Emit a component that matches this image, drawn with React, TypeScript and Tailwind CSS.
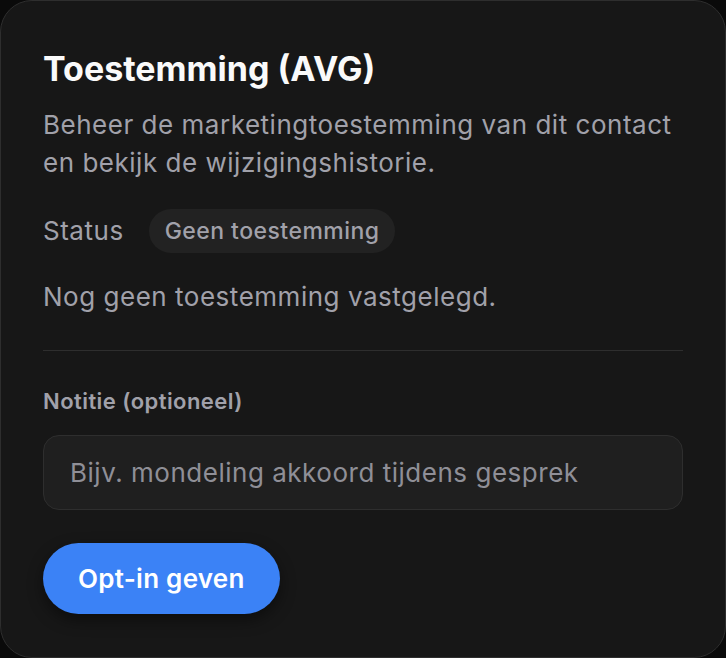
import React from "react"

const App = () => {
  const [note, setNote] = React.useState("")

  return (
    <div
      className="w-[726px] h-[658px] bg-[#0a0a0a]"
      style={{ fontFamily: "Inter, 'Noto Sans', sans-serif" }}
    >
      <div className="w-[726px] h-[658px] rounded-[32px] border border-[#2e2e2e] bg-[#171717] px-[42px] pt-[46px]">
        <h2 className="text-[34px] leading-[44px] font-bold text-[#fafafa]">Toestemming (AVG)</h2>
        <p className="mt-[15px] text-[26px] leading-[38px] text-[#a1a1aa] tracking-[0.02em]">
          Beheer de marketingtoestemming van dit contact en bekijk de wijzigingshistorie.
        </p>

        <div className="mt-[27px] flex items-center gap-[25px]">
          <span className="text-[26px] leading-[38px] text-[#a1a1aa] tracking-[0.02em]">Status</span>
          <span className="h-[44px] px-[16px] rounded-full bg-[#222222] flex items-center text-[23px] font-medium text-[#a1a1aa] tracking-[0.02em]">
            Geen toestemming
          </span>
        </div>

        <p className="mt-[25px] text-[26px] leading-[38px] text-[#a1a1aa] tracking-[0.02em]">
          Nog geen toestemming vastgelegd.
        </p>

        <div className="mt-[34px] h-px bg-[#2e2e2e]" />

        <label
          htmlFor="note"
          className="block mt-[35px] text-[22px] leading-[30px] font-semibold text-[#a1a1aa] tracking-[0.02em]"
        >
          Notitie (optioneel)
        </label>
        <input
          id="note"
          value={note}
          onChange={(e) => setNote(e.target.value)}
          placeholder="Bijv. mondeling akkoord tijdens gesprek"
          className="mt-[19px] w-full h-[75px] rounded-[16px] border border-[#2e2e2e] bg-[#1f1f1f] px-[26px] text-[26px] tracking-[0.02em] text-[#fafafa] placeholder:text-[#8f8f97] outline-none"
        />

        <button
          type="button"
          className="mt-[33px] h-[71px] px-[35px] rounded-full bg-[#3b82f6] text-white text-[26px] font-semibold tracking-[0.01em] shadow-[0_6px_16px_rgba(0,0,0,0.45)]"
        >
          Opt-in geven
        </button>
      </div>
    </div>
  )
}

export default App
